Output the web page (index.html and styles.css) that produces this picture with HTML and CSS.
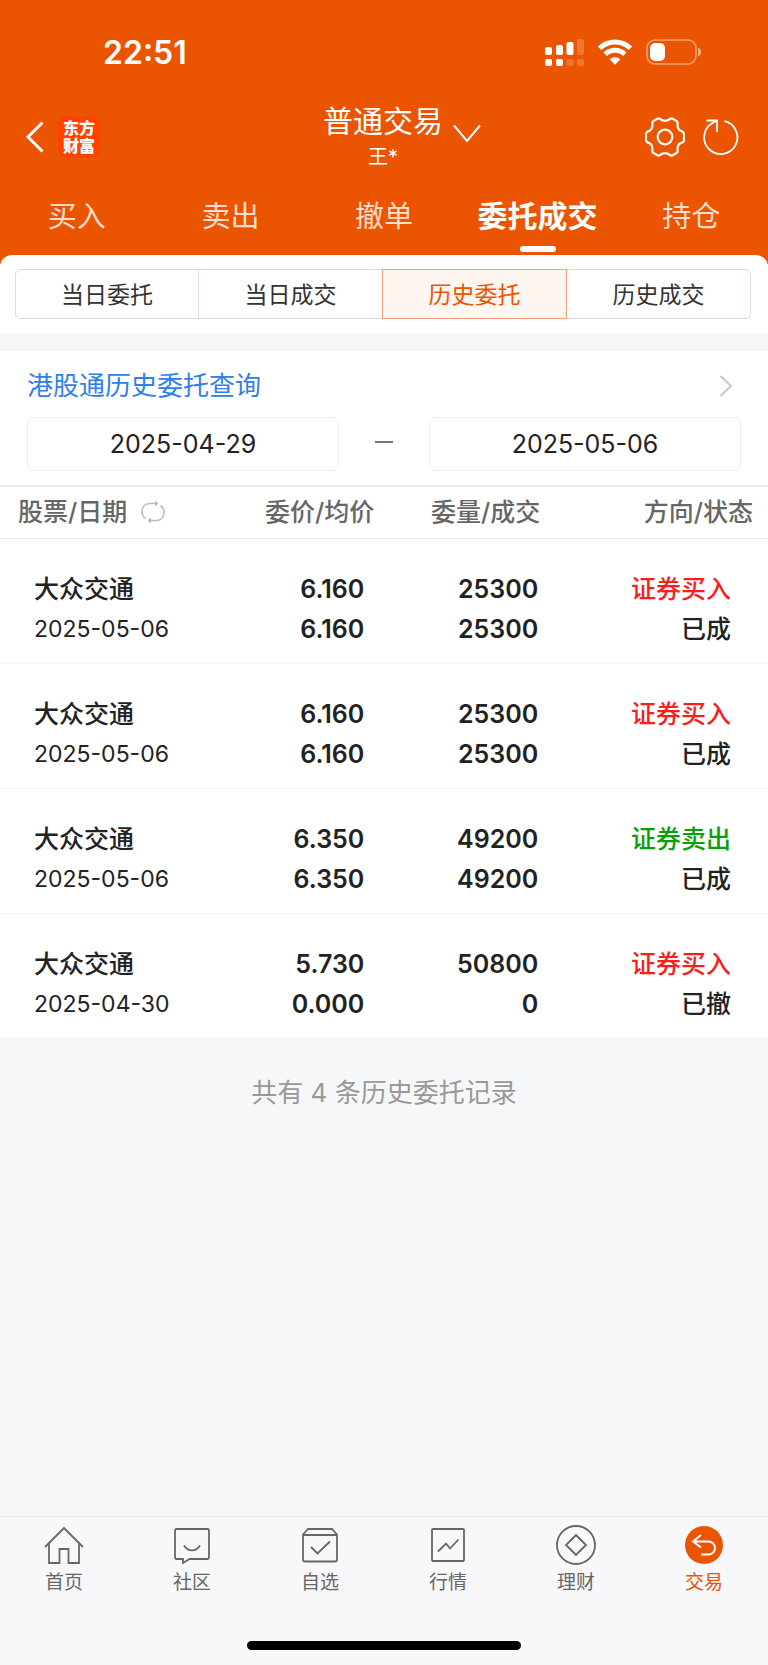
FILE: index.html
```html
<!DOCTYPE html>
<html lang="zh-CN">
<head>
  <meta charset="UTF-8">
  <meta name="viewport" content="width=device-width, initial-scale=1.0">
  <title>普通交易</title>
  <link rel="stylesheet" href="styles.css">
</head>
<body>
  <header class="header">
    <!-- 状态栏 -->
    <div class="status-bar">
      <span class="time">22:51</span>
      <div class="status-icons">
        <svg width="40" height="28" viewBox="0 0 40 28" fill="#fff">
          <rect x="1" y="9" width="7" height="8" rx="2"/>
          <rect x="12" y="7" width="7" height="10" rx="2"/>
          <rect x="22.500" y="4" width="7" height="13" rx="2"/>
          <rect x="33" y="1" width="7" height="16" rx="2" opacity=".2"/>
          <rect x="1" y="21" width="7" height="7" rx="2"/>
          <rect x="12" y="21" width="7" height="7" rx="2"/>
          <rect x="22.500" y="21" width="7" height="7" rx="2" opacity=".2"/>
          <rect x="33" y="21" width="7" height="7" rx="2" opacity=".2"/>
        </svg>
        <svg width="36" height="28" viewBox="0 0 36 28" fill="none" stroke="#fff" stroke-width="5">
          <path d="M2.500 10.200a22.300 22.300 0 0 1 31 0"/>
          <path d="M8.200 16.200a14.200 14.200 0 0 1 19.600 0"/>
          <path d="M12.600 21.300a8 8 0 0 1 10.800 0L18 26.700z" fill="#fff" stroke="none"/>
        </svg>
        <svg width="56" height="28" viewBox="0 0 56 28">
          <rect x="1" y="2" width="49" height="24" rx="8" fill="none" stroke="#fff" stroke-width="1.500" opacity=".45"/>
          <rect x="4" y="5" width="15" height="18" rx="5" fill="#fff"/>
          <path d="M52 9.500c4 1.500 4 7.500 0 9z" fill="#fff" opacity=".5"/>
        </svg>
      </div>
    </div>

    <div class="title-bar">
      <div class="title-left">
        <button class="icon-btn" type="button" aria-label="返回">
          <svg width="20" height="34" viewBox="0 0 20 34" fill="none" stroke="#fff" stroke-width="3">
            <path d="M17.500 2.500 3 17l14.500 14.500"/>
          </svg>
        </button>
        <a class="logo" href="#">东方<br>财富</a>
      </div>
      <button class="account" type="button">
        <span class="account-text">
          <span class="account-type">普通交易</span>
          <span class="account-name">王*</span>
        </span>
        <svg width="28" height="20" viewBox="0 0 28 20" fill="none" stroke="#fff" stroke-width="2">
          <path d="M1 1.500 14 17 27 1.500"/>
        </svg>
      </button>
      <div class="title-right">
        <button class="icon-btn" type="button" aria-label="设置">
          <svg width="40" height="40" viewBox="0 0 40 40" fill="none" stroke="#fff" stroke-width="2.200" stroke-linejoin="round">
            <path d="M12.500 1.600Q14 1 15 2Q20 5.600 25 2Q26 1 27.500 1.600L31.500 4Q33 5 32.600 6.500Q32 13.500 37.600 14.600Q38.800 15.500 39 17V23Q38.800 24.500 37.600 25.400Q32 26.500 32.600 33.500Q33 35 31.500 36L27.500 38.400Q26 39 25 38Q20 34.400 15 38Q14 39 12.500 38.400L8.500 36Q7 35 7.400 33.500Q8 26.500 2.400 25.400Q1.200 24.500 1 23V17Q1.200 15.500 2.400 14.600Q8 13.500 7.400 6.500Q7 5 8.500 4Z"/>
            <circle cx="20" cy="20" r="7.300"/>
          </svg>
        </button>
        <button class="icon-btn" type="button" aria-label="刷新">
          <svg width="36" height="40" viewBox="0 0 36 40" fill="none" stroke="#fff" stroke-width="1.800">
            <path d="M21.500 4.200A16.600 16.600 0 1 1 9.500 6L14 3.500M3.500 3.500H14V15"/>
          </svg>
        </button>
      </div>
    </div>

    <nav class="tabs">
      <a href="#">买入</a>
      <a href="#">卖出</a>
      <a href="#">撤单</a>
      <a href="#" class="active">委托成交</a>
      <a href="#">持仓</a>
    </nav>
  </header>

  <main class="main">
    <div class="segment-wrap">
      <div class="segment">
        <button type="button">当日委托</button>
        <button type="button">当日成交</button>
        <button type="button" class="active">历史委托</button>
        <button type="button">历史成交</button>
      </div>
    </div>

    <section class="query">
      <a class="hk-link" href="#">
        <span>港股通历史委托查询</span>
        <svg width="14" height="22" viewBox="0 0 14 22" fill="none" stroke="#c8c8c8" stroke-width="2">
          <path d="M1.500 1 12 11 1.500 21"/>
        </svg>
      </a>
      <div class="dates">
        <input type="text" value="2025-04-29" aria-label="开始日期">
        <span class="dash"></span>
        <input type="text" value="2025-05-06" aria-label="结束日期">
      </div>
    </section>

    <table class="orders">
      <thead>
        <tr>
          <th>
            <button class="switch" type="button">
              股票/日期
              <svg width="24" height="24" viewBox="0 0 24 24" fill="none" stroke="#bbb" stroke-width="1.600">
                <path d="M4.500 18.500C1.500 16.500 1 14.500 1 12c0-5 3-8.500 8-8.500h7M19.500 5.500C22.500 7.500 23 9.500 23 12c0 5-3 8.500-8 8.500H8"/>
                <path d="M14 .5 17.500 3.500 14 6.500zM10 17.500 6.500 20.500 10 23.500z" fill="#bbb" stroke="none"/>
              </svg>
            </button>
          </th>
          <th>委价/均价</th>
          <th>委量/成交</th>
          <th>方向/状态</th>
        </tr>
      </thead>
      <tbody>
        <tr>
          <td>大众交通<span class="date">2025-05-06</span></td>
          <td>6.160<br>6.160</td>
          <td>25300<br>25300</td>
          <td><span class="buy">证券买入</span><br>已成</td>
        </tr>
        <tr>
          <td>大众交通<span class="date">2025-05-06</span></td>
          <td>6.160<br>6.160</td>
          <td>25300<br>25300</td>
          <td><span class="buy">证券买入</span><br>已成</td>
        </tr>
        <tr>
          <td>大众交通<span class="date">2025-05-06</span></td>
          <td>6.350<br>6.350</td>
          <td>49200<br>49200</td>
          <td><span class="sell">证券卖出</span><br>已成</td>
        </tr>
        <tr>
          <td>大众交通<span class="date">2025-04-30</span></td>
          <td>5.730<br>0.000</td>
          <td>50800<br>0</td>
          <td><span class="buy">证券买入</span><br>已撤</td>
        </tr>
      </tbody>
    </table>

    <p class="total">共有 4 条历史委托记录</p>
  </main>

  <!-- 底部导航 -->
  <footer class="footer">
    <nav class="tab-bar">
      <a href="#">
        <svg width="40" height="40" viewBox="0 0 40 40">
          <path d="M1 22 20 3l19 19M5 18.500V38h10.500V24h9v14H35V18.500"/>
        </svg>
        首页
      </a>
      <a href="#">
        <svg width="40" height="40" viewBox="0 0 40 40">
          <path d="M4.500 4h31q1.500 0 1.500 1.500v27q0 1.500-1.500 1.500H17.500l-6.500 4V34H4.500Q3 34 3 32.500v-27Q3 4 4.500 4z"/>
          <path d="M12 20.500c4 6.500 12 6.500 16 0"/>
        </svg>
        社区
      </a>
      <a href="#">
        <svg width="40" height="40" viewBox="0 0 40 40">
          <path d="M3 9.500 8 4h24l5 5.500v25q0 2-2 2H5q-2 0-2-2zM3 10h34M11 22l6.500 6.500L30 16.500"/>
        </svg>
        自选
      </a>
      <a href="#">
        <svg width="40" height="40" viewBox="0 0 40 40">
          <rect x="4" y="4" width="32" height="32" rx="1"/>
          <path d="m10 26.500 8-8 4 5 8.500-9"/>
        </svg>
        行情
      </a>
      <a href="#">
        <svg width="40" height="40" viewBox="0 0 40 40">
          <circle cx="20" cy="20" r="19"/>
          <path d="M20 10 30 20 20 30 10 20z"/>
        </svg>
        理财
      </a>
      <a href="#" class="active">
        <svg width="40" height="40" viewBox="0 0 40 40">
          <circle class="disc" cx="20" cy="20" r="19"/>
          <path class="arrow" d="M17 10 9 16.500l8 6M9 16.500h15.500a6.500 6.500 0 0 1 0 13H17"/>
        </svg>
        交易
      </a>
    </nav>
    <div class="home-indicator"></div>
  </footer>
</body>
</html>
```

FILE: styles.css
```css
* {
  box-sizing: border-box;
}

body {
  display: flex;
  flex-direction: column;
  min-height: 100vh;
  margin: 0;
  background-color: #f6f7f9;
  color: #222;
  font-family: Inter, "Noto Sans CJK SC", sans-serif;
}

a {
  color: inherit;
  text-decoration: none;
}

button {
  padding: 0;
  border: none;
  background: none;
  color: inherit;
  font: inherit;
  cursor: pointer;
}

svg {
  display: block;
  flex-shrink: 0;
}

/* 顶部 */
.header {
  padding-bottom: 12px;
  background-color: #eb5502;
  color: #fff;
}

.status-bar {
  display: flex;
  align-items: center;
  justify-content: space-between;
  height: 104px;
  padding: 0 66px 0 103px;
}

.time {
  font-size: 32px;
  font-weight: 600;
}

.status-icons {
  display: flex;
  gap: 13px;
}

.title-bar {
  display: grid;
  grid-template-columns: 1fr auto 1fr;
  align-items: center;
  height: 64px;
  padding: 0 29px 0 25px;
}

.title-left,
.title-right {
  display: flex;
  align-items: center;
  gap: 13px;
  padding-bottom: 2px;
}

.title-left {
  margin-bottom: 4px;
}

.title-right {
  justify-content: flex-end;
  gap: 18px;
  margin-bottom: 4px;
}

.logo {
  width: 42px;
  height: 42px;
  padding-top: 3px;
  border-radius: 8px;
  background-color: #ff4200;
  font-size: 16px;
  font-weight: 900;
  line-height: 18px;
  text-align: center;
}

.account {
  display: flex;
  align-items: center;
  gap: 10px;
  padding-left: 40px;
}

.account svg {
  margin-bottom: 12px;
}

.account-text {
  display: flex;
  flex-direction: column;
  align-items: center;
}

.account-type {
  font-size: 30px;
  line-height: 34px;
}

.account-name {
  font-size: 20px;
  line-height: 38px;
}

.tabs {
  display: grid;
  grid-template-columns: repeat(5, 1fr);
  height: 84px;
}

.tabs a {
  display: flex;
  flex-direction: column;
  align-items: center;
  justify-content: flex-end;
  padding-bottom: 12px;
  font-size: 29px;
  line-height: 46px;
  color: #ffddcb;
}

.tabs .active {
  padding-bottom: 0;
  color: #fff;
  font-size: 30px;
  font-weight: 600;
}

.tabs .active::after {
  content: "";
  width: 36px;
  height: 6px;
  margin-top: 7px;
  border-radius: 3px;
  background-color: #fff;
}

/* 内容 */
.main {
  flex: 1;
  margin-top: -9px;
}

.segment-wrap {
  padding: 14px 17px 14px 15px;
  border-radius: 12px 12px 0 0;
  background-color: #fff;
}

.segment {
  display: grid;
  grid-template-columns: repeat(4, 1fr);
}

.segment button {
  height: 50px;
  margin-left: -1px;
  padding-bottom: 2px;
  border: 1px solid #d8dce2;
  font-size: 23px;
  color: #333;
}

.segment button:first-child {
  margin-left: 0;
  border-radius: 6px 0 0 6px;
}

.segment button:last-child {
  border-radius: 0 6px 6px 0;
}

.segment .active {
  z-index: 1;
  border-color: #f0a078;
  background-color: #fff5f1;
  color: #eb5502;
}

.query {
  margin-top: 18px;
  padding: 15px 27px 14px;
  border-bottom: 2px solid #ebebeb;
  background-color: #fff;
}

.hk-link {
  display: flex;
  align-items: center;
  justify-content: space-between;
  padding-right: 8px;
  color: #2f80e8;
  font-size: 26px;
  line-height: 40px;
}

.dates {
  display: flex;
  align-items: center;
  justify-content: space-between;
  margin-top: 11px;
}

.dates input {
  width: 312px;
  max-width: 44%;
  height: 54px;
  padding: 0;
  border: 1px solid #eee;
  border-radius: 6px;
  background-color: #fff;
  color: #222;
  font: inherit;
  font-size: 25px;
  text-align: center;
}

.dash {
  width: 18px;
  height: 2px;
  margin-bottom: 4px;
  background-color: #777;
}

/* 委托列表 */
.orders {
  width: 100%;
  table-layout: fixed;
  border-collapse: collapse;
  background-color: #fff;
  font-size: 25px;
  font-weight: 500;
}

.orders th {
  height: 51px;
  padding: 0;
  border-bottom: 1px solid #e8e8e8;
  color: #666;
  font-weight: 500;
  line-height: 50px;
  text-align: right;
}

.orders th:nth-child(1) {
  width: 26%;
  padding-left: 18px;
}

.orders th:nth-child(2) {
  width: 23%;
  padding-right: 2px;
}

.orders th:nth-child(3) {
  width: 22%;
  padding-right: 5px;
}

.orders th:nth-child(4) {
  width: 29%;
  padding-right: 15px;
}

.switch {
  display: flex;
  align-items: center;
  gap: 14px;
}

.orders td {
  padding: 30px 0 14px;
  border-bottom: 1px solid #f3f3f3;
  line-height: 40px;
  text-align: right;
}

.orders td:nth-child(1) {
  padding-left: 34px;
  text-align: left;
}

.orders td:nth-child(2) {
  padding-right: 12px;
  font-weight: 600;
}

.orders td:nth-child(3) {
  padding-right: 7px;
  font-weight: 600;
}

.orders td:nth-child(4) {
  padding-right: 37px;
}

.date {
  display: block;
  font-size: 23px;
  font-weight: 400;
}

.buy {
  color: #f91e1e;
}

.sell {
  color: #0a9e0a;
}

.total {
  margin: 0;
  padding: 34px 0;
  color: #999;
  font-size: 26px;
  line-height: 40px;
  text-align: center;
}

/* 底部 */
.footer {
  border-top: 1px solid #e8e9eb;
  background-color: #f8f8fa;
}

.tab-bar {
  display: grid;
  grid-template-columns: repeat(6, 1fr);
  padding: 8px 0;
}

.tab-bar a {
  display: flex;
  flex-direction: column;
  align-items: center;
  gap: 4px;
  color: #666;
  font-size: 19px;
  line-height: 28px;
}

.tab-bar svg {
  fill: none;
  stroke: #666;
  stroke-width: 1.8;
}

.tab-bar .active {
  color: #eb5502;
}

.tab-bar .disc {
  fill: #eb5502;
  stroke: none;
}

.tab-bar .arrow {
  stroke: #fff;
  stroke-width: 2;
}

.home-indicator {
  width: 274px;
  height: 9px;
  margin: 36px auto 15px;
  border-radius: 5px;
  background-color: #000;
}
```
